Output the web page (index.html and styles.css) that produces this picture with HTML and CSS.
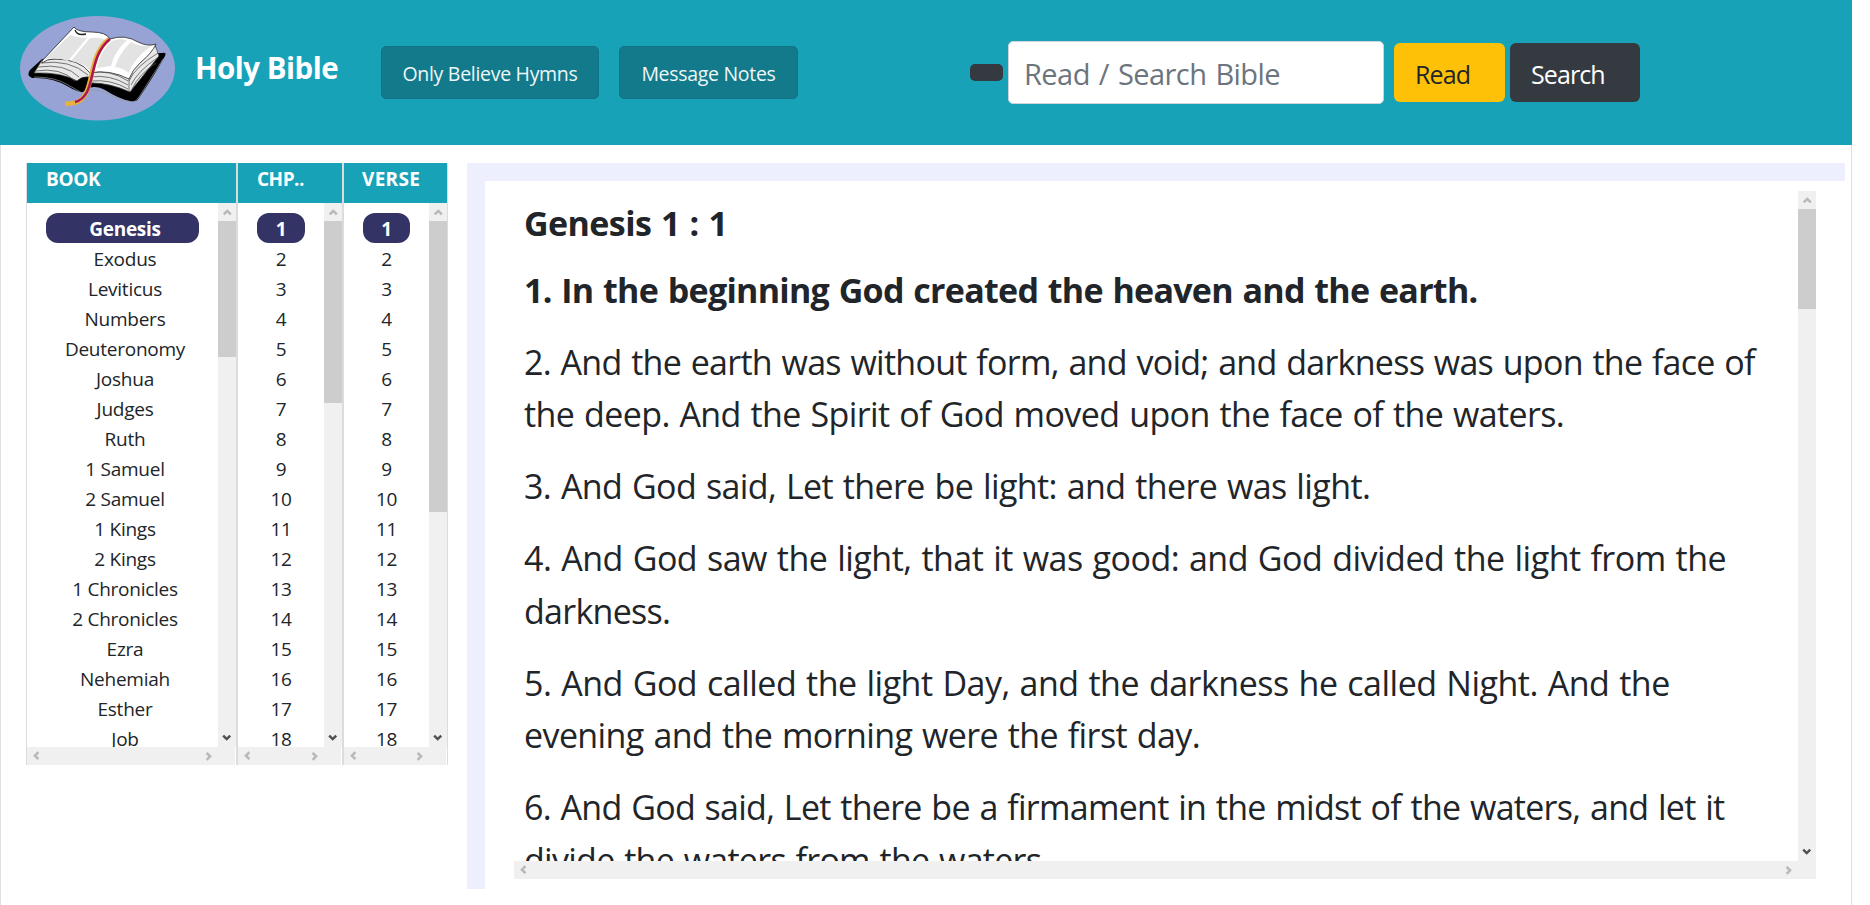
FILE: index.html
```html
<!DOCTYPE html>
<html lang="en">
<head>
<meta charset="utf-8">
<title>Holy Bible</title>
<link rel="stylesheet" href="styles.css">
</head>
<body>
<svg class="defs" width="0" height="0" aria-hidden="true">
  <symbol id="chev" viewBox="0 0 18 18"><path d="M5.8 11.4 9.3 7.9l3.5 3.5" fill="none" stroke="currentColor" stroke-width="2.5"/></symbol>
</svg>
<div class="page">
  <header class="top">
    <svg class="logo" viewBox="0 0 155 105">
      <ellipse cx="77.5" cy="52.3" rx="77.5" ry="52.3" fill="#97a3d4"/>
      <path d="M22 43 10 54q-4 5 2 8 20-1 35 8 12 7 16 6 10-9 22-2 14 9 25 11 6 2 9-3 15-22 26-42 2-4-3-3z" fill="#000"/>
      <path d="M14 61q22 0 34 8l16 9q10-7 20-2 16 9 28 10 4 0 7-5l24-38" fill="none" stroke="#999" stroke-width=".7"/>
      <path d="M22 44 14 57q28-1 43 8 5-5 12-4l3 6q18 0 38 9l29-36-4-11-60 10z" fill="#e8e8e8" stroke="#333" stroke-width=".7"/>
      <path d="M22 45 54 11q3 5 18 5 14 0 18 7 15-5 28 3 10 5 18 2-4 9-15 18-9 8-12 17-20-10-39-6-10-14-36-14-7 0-12 4z" fill="#fff" stroke="#222" stroke-width=".8"/>
      <path d="M25 43 50 19q8 3 17 3L48 45q-10-4-23-2zM51 45l19-23q10-1 16 2-12 13-16 31-6-8-19-10zM77 52q3-17 15-27 7-3 15-1-13 12-16 26zM95 51q5-15 16-25 8 5 20 4-18 13-22 27-6-5-14-6z" fill="#e3e3e3"/>
      <path d="M21 47q29-4 47 12M18 51q27-4 41 10M15 55q26-4 40 10M70 57q20-4 38 8M70 61q20-3 38 8M71 65q20-2 37 8M109 62v13M109 65q6-14 29-28M111 69q7-14 26-27M112 73q7-15 24-26" fill="none" stroke="#555" stroke-width=".8"/>
      <path d="M55 14q2 6 11 4" fill="none" stroke="#222" stroke-width="1.3"/>
      <path d="M89 23C65 42 77 82 54 87l-9 1" fill="none" stroke="#e7b13c" stroke-width="4.6"/>
      <path d="M90 23C66 42 78 80 55 86" fill="none" stroke="#ad1457" stroke-width="2.5"/>
    </svg>
    <span class="brand">Holy Bible</span>
    <nav class="nav"><a class="pill hymns"><span>Only Believe Hymns</span></a><a class="pill notes"><span>Message Notes</span></a></nav>
    <form class="search">
      <span class="stub"></span>
      <span class="field">Read / Search Bible</span>
      <button type="button" class="btn read">Read</button>
      <button type="button" class="btn find">Search</button>
    </form>
  </header>
  <main class="main">
    <section class="picker">
      <div class="col book">
        <div class="head">BOOK</div>
        <div class="scroll">
          <ul class="list"><li class="on">Genesis</li><li>Exodus</li><li>Leviticus</li><li>Numbers</li><li>Deuteronomy</li><li>Joshua</li><li>Judges</li><li>Ruth</li><li>1 Samuel</li><li>2 Samuel</li><li>1 Kings</li><li>2 Kings</li><li>1 Chronicles</li><li>2 Chronicles</li><li>Ezra</li><li>Nehemiah</li><li>Esther</li><li>Job</li></ul>
          <div class="vbar"><svg class="ar"><use href="#chev"/></svg><i class="thumb"></i><svg class="ar down"><use href="#chev"/></svg></div>
        </div>
        <div class="hbar"><svg class="ar left"><use href="#chev"/></svg><svg class="ar right"><use href="#chev"/></svg></div>
      </div>
      <div class="col chp">
        <div class="head">CHP..</div>
        <div class="scroll">
          <ul class="list"><li class="on">1</li><li>2</li><li>3</li><li>4</li><li>5</li><li>6</li><li>7</li><li>8</li><li>9</li><li>10</li><li>11</li><li>12</li><li>13</li><li>14</li><li>15</li><li>16</li><li>17</li><li>18</li></ul>
          <div class="vbar"><svg class="ar"><use href="#chev"/></svg><i class="thumb"></i><svg class="ar down"><use href="#chev"/></svg></div>
        </div>
        <div class="hbar"><svg class="ar left"><use href="#chev"/></svg><svg class="ar right"><use href="#chev"/></svg></div>
      </div>
      <div class="col verse">
        <div class="head">VERSE</div>
        <div class="scroll">
          <ul class="list"><li class="on">1</li><li>2</li><li>3</li><li>4</li><li>5</li><li>6</li><li>7</li><li>8</li><li>9</li><li>10</li><li>11</li><li>12</li><li>13</li><li>14</li><li>15</li><li>16</li><li>17</li><li>18</li></ul>
          <div class="vbar"><svg class="ar"><use href="#chev"/></svg><i class="thumb"></i><svg class="ar down"><use href="#chev"/></svg></div>
        </div>
        <div class="hbar"><svg class="ar left"><use href="#chev"/></svg><svg class="ar right"><use href="#chev"/></svg></div>
      </div>
    </section>
    <section class="frame">
      <div class="reader">
        <div class="scroll">
          <article class="text">
            <h1>Genesis 1 : 1</h1>
            <p class="current">1. In the beginning God created the heaven and the earth.</p>
            <p><span class="tight">2. And the earth was without form, and void; and darkness was upon the face of</span><br>the deep. And the Spirit of God moved upon the face of the waters.</p>
            <p>3. And God said, Let there be light: and there was light.</p>
            <p><span class="loose">4. And God saw the light, that it was good: and God divided the light from the</span><br><span class="tight">darkness.</span></p>
            <p><span class="loose">5. And God called the light Day, and the darkness he called Night. And the</span><br>evening and the morning were the first day.</p>
            <p class="tight">6. And God said, Let there be a firmament in the midst of the waters, and let it<br>divide the waters from the waters.</p>
          </article>
          <div class="vbar"><svg class="ar"><use href="#chev"/></svg><i class="thumb"></i><svg class="ar down"><use href="#chev"/></svg></div>
        </div>
        <div class="hbar"><svg class="ar left"><use href="#chev"/></svg><svg class="ar right"><use href="#chev"/></svg></div>
      </div>
    </section>
  </main>
</div>
</body>
</html>
```
FILE: styles.css
```css
* { box-sizing: border-box; }
body {
  margin: 0;
  height: 905px;
  overflow: hidden;
  background: #fff;
  color: #212529;
  font-family: "Open Sans", "Noto Sans", sans-serif;
}
.defs { display: block; }
.page { width: 1852px; height: 905px; display: flex; flex-direction: column; }

/* Header */
.top { height: 145px; flex: none; background: #18a2b8; display: flex; align-items: flex-start; }
.logo { width: 155px; height: 105px; margin: 16px 0 0 20px; flex: none; }
.brand {
  width: 184px; margin: 47px 0 0 20px; padding-left: 0;
  font-size: 29.5px; line-height: 42px; font-weight: 700; color: #fff;
  white-space: nowrap; letter-spacing: -.5px;
}
.nav { display: flex; gap: 20px; margin: 46px 0 0 2px; }
.pill {
  height: 53px; border: 1px solid #137285; border-radius: 5px; background: #127a8a;
  color: #eef7f8; font-size: 19.5px; line-height: 53px; font-weight: 500;
  text-align: center; white-space: nowrap; letter-spacing: -.3px;
}
.hymns { width: 218px; }
.notes { width: 179px; }
.search { display: flex; align-items: flex-start; margin: 41px 0 0 172px; }
.stub { width: 33px; height: 17px; margin: 23px 5px 0 0; border-radius: 5px; background: #343a40; }
.field {
  width: 376px; height: 63px; padding: 0 15px; border: 1px solid #ced4da; border-radius: 5px;
  background: #fff; color: #6c757d; font-size: 29px; line-height: 64px; white-space: nowrap;
  letter-spacing: -.55px; word-spacing: 2px;
}
.btn {
  height: 59px; margin-top: 2px; padding: 0 0 0 21px; border: 0; border-radius: 6px;
  font: 400 25px/62px "Open Sans", "Noto Sans", sans-serif; text-align: left; letter-spacing: -.9px;
}
.read { width: 111px; margin-left: 10px; background: #ffc107; color: #212529; }
.find { width: 130px; margin-left: 5px; background: #343a40; color: #fff; }

/* Body */
.main {
  flex: 1; display: flex; align-items: flex-start; padding: 18px 6px 0 25px;
  border: solid #dee2e6; border-width: 0 1px;
}
.picker { display: flex; height: 602px; }
.col { border: solid #dcdcdc; border-width: 0 1px; }
.book { width: 211px; }
.chp { width: 106px; }
.verse { width: 105px; }
.head {
  height: 40px; padding-left: 19px; background: #18a2b8; color: #fff;
  font-size: 19px; line-height: 32px; font-weight: 700; letter-spacing: -.3px; white-space: nowrap;
}
.chp .head { letter-spacing: -.5px; }
.verse .head { padding-left: 18px; letter-spacing: .3px; }
.scroll { display: flex; }
.col .scroll { height: 544px; }
.list {
  flex: 1; height: 544px; margin: 0; padding: 10px 19px 0; overflow: hidden; list-style: none;
  font-size: 19px; line-height: 33px; text-align: center;
}
.list li { height: 30px; letter-spacing: -.25px; white-space: nowrap; }
.book li { padding-left: 5px; }
.list .on { border-radius: 12px; background: #333366; color: #fff; font-weight: 700; }
.vbar { width: 18px; flex: none; display: flex; flex-direction: column; background: #f0f0f0; }
.hbar { height: 18px; display: flex; justify-content: space-between; background: #f0f0f0; margin-right: 1px; padding-right: 17px; }
.ar { width: 18px; height: 18px; flex: none; color: #b8b8b8; display: block; }
.down { margin-top: auto; transform: rotate(180deg); color: #505050; }
.left { transform: rotate(-90deg); }
.right { transform: rotate(90deg); }
.thumb { background: #cdcdcd; }
.book .thumb { height: 136px; }
.chp .thumb { height: 182px; }
.verse .thumb { height: 291px; }

/* Reader */
.frame {
  width: 1378px; height: 726px; margin-left: 19px; padding: 10px 0 0 29px;
  border: solid #edeffe; border-width: 18px 0 0 18px;
}
.reader { width: 1302px; }
.reader .scroll { height: 670px; }
.reader .thumb { height: 100px; }
.reader .hbar { margin-right: 0; padding-right: 18px; }
.text { flex: 1; height: 670px; padding: 6px 0 0 10px; overflow: hidden; }
.text h1, .text p { margin: 0; font-size: 34px; line-height: 52.5px; white-space: nowrap; word-spacing: 1.5px; }
.text h1 { font-weight: 700; margin-bottom: 14px; letter-spacing: -.58px; }
.text p { margin-bottom: 19.5px; letter-spacing: -.6px; }
.text .current { font-weight: 700; letter-spacing: -.72px; }
.text .tight { letter-spacing: -.72px; }
.text .loose { letter-spacing: -.5px; }
```
